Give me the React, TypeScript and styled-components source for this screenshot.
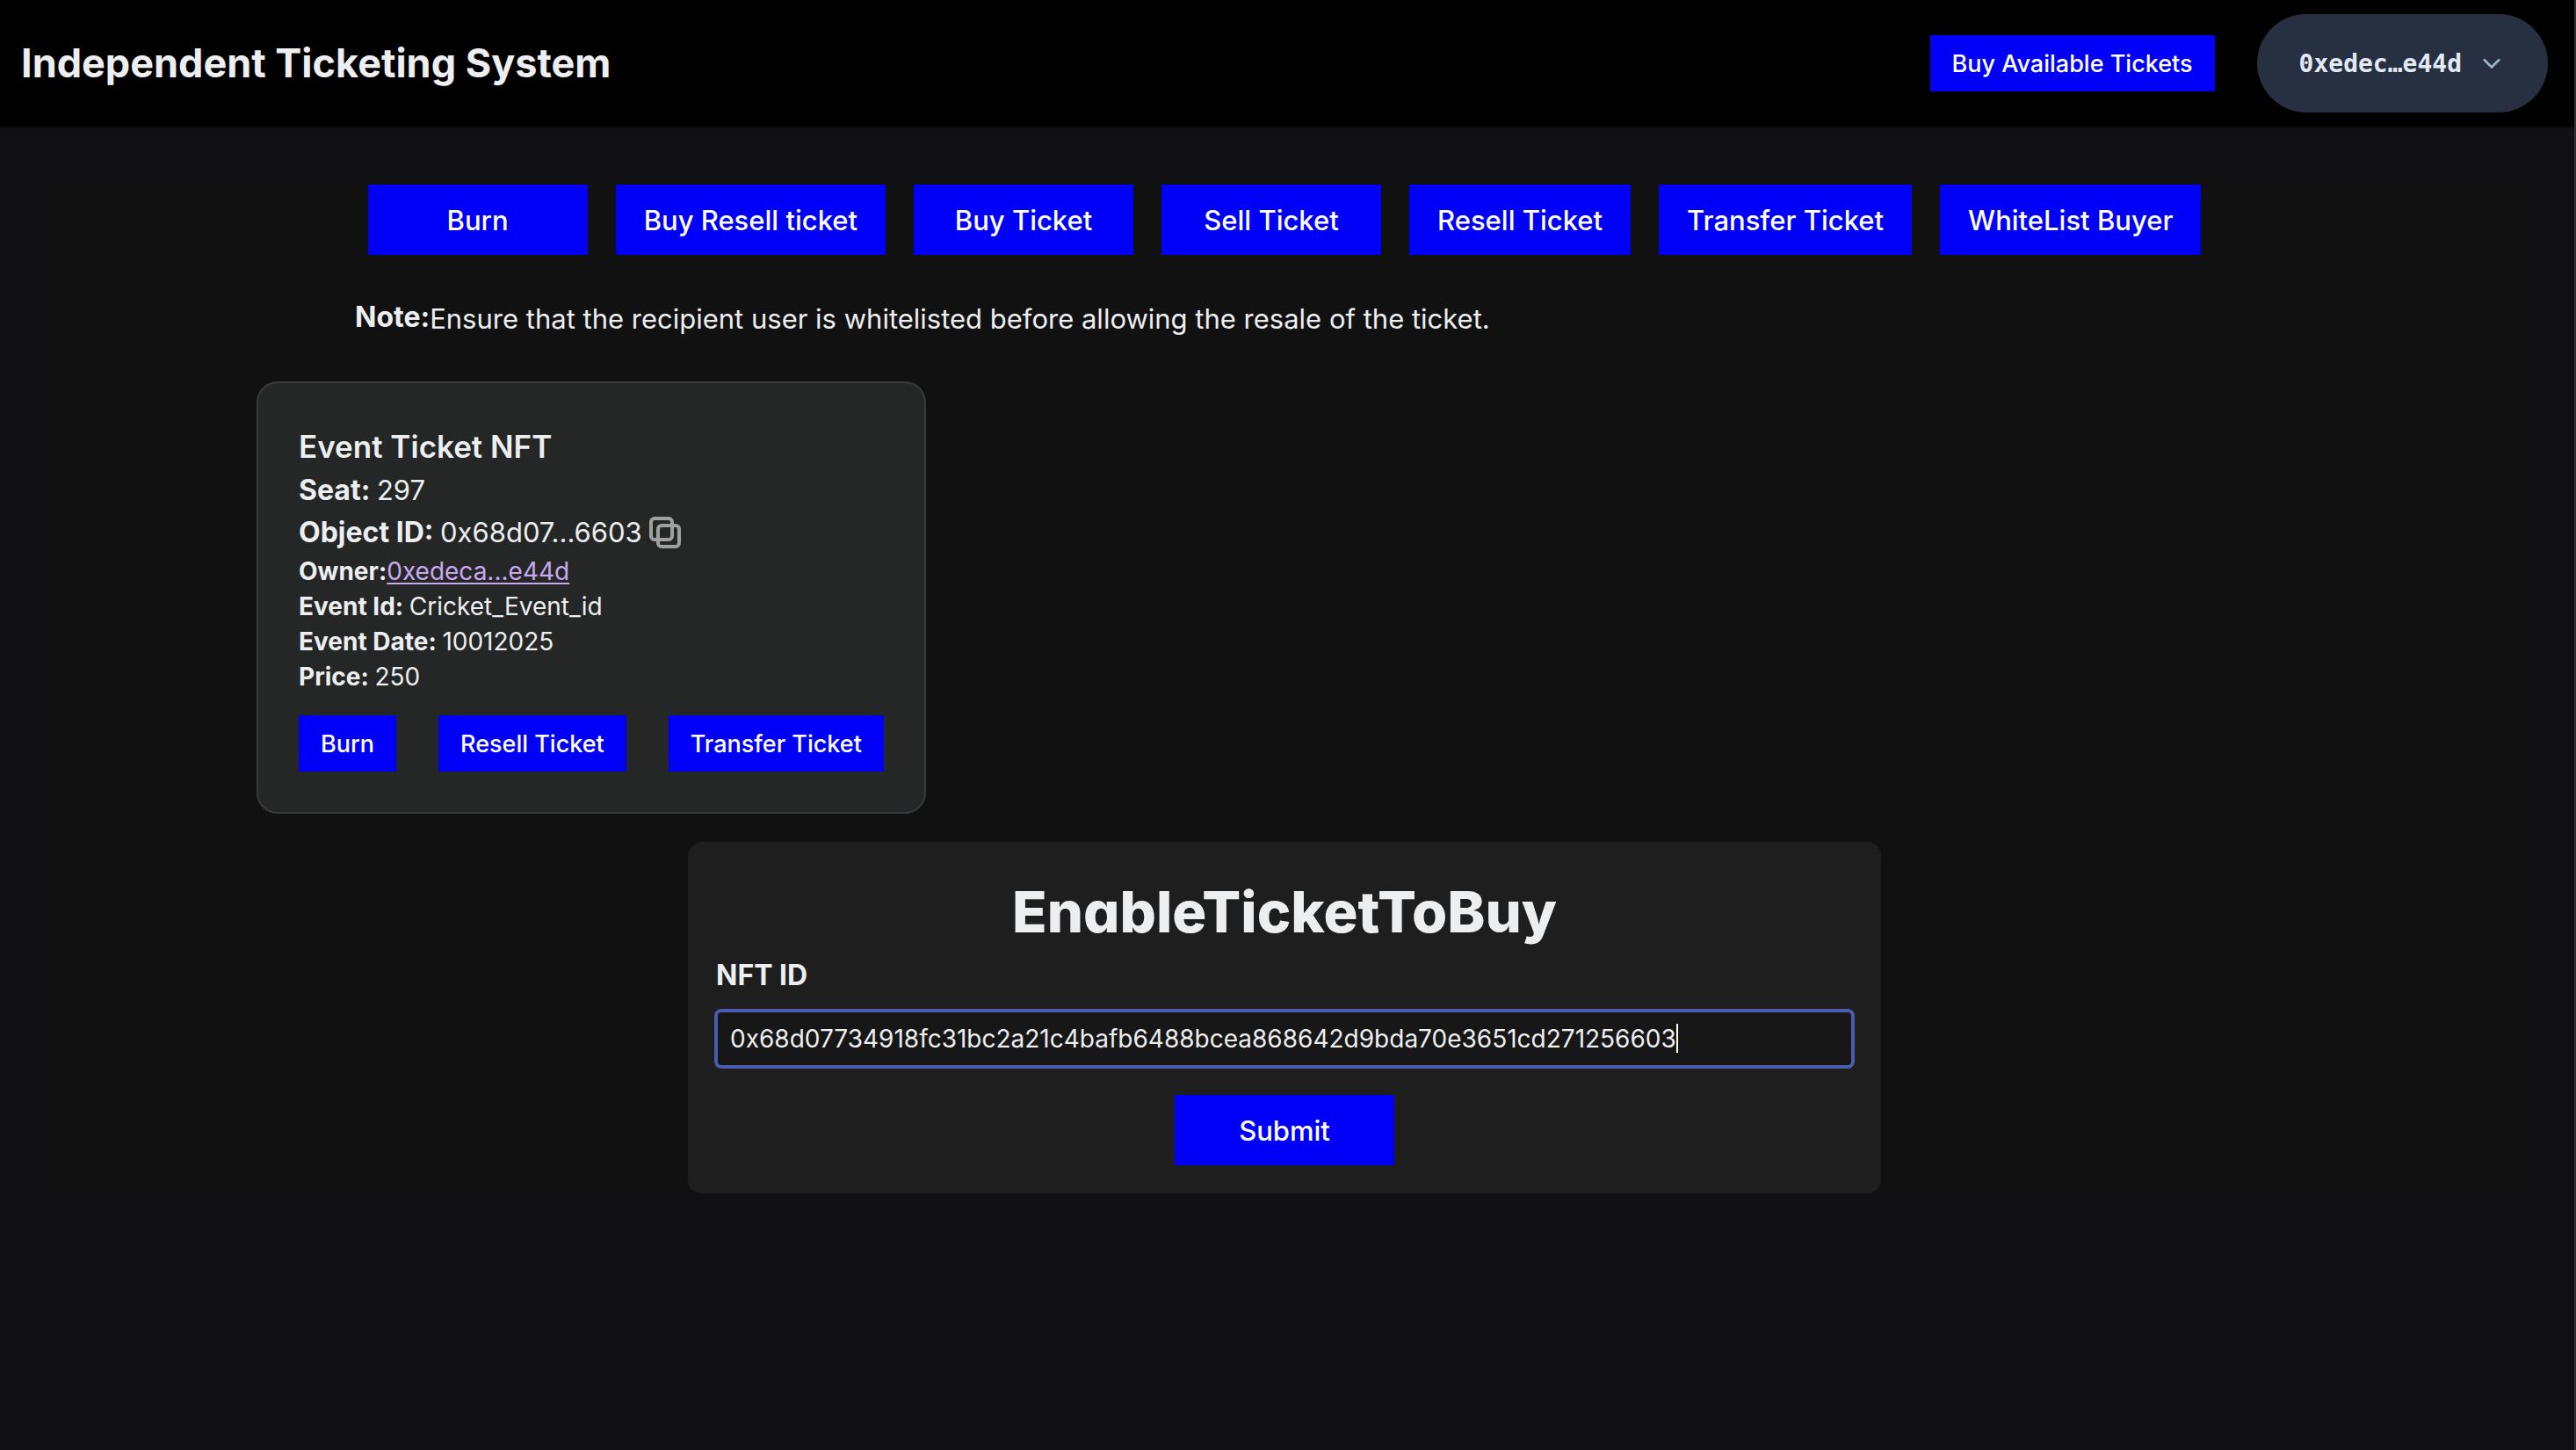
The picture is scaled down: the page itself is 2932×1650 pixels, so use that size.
import React, { useLayoutEffect, useRef, useState } from "react";
import styled, { createGlobalStyle } from "styled-components";

const GlobalStyle = createGlobalStyle`
  *, *::before, *::after { box-sizing: border-box; }
  body {
    margin: 0;
    background: #111113;
    color: #edeef0;
    font-family: Inter, "Liberation Sans", sans-serif;
  }
  h1, h2, p { margin: 0; }
  button, input { font-family: inherit; }
`;

const Page = styled.div`
  min-height: 100vh;
  border-right: 2px solid #313131;
`;

const Header = styled.header`
  display: flex;
  align-items: center;
  justify-content: space-between;
  height: 146px;
  padding: 0 30px 0 24px;
  background: #000;
  border-bottom: 2px solid #0b0b0c;
`;

const Brand = styled.h1`
  font-size: 45px;
  line-height: 60px;
  font-weight: 700;
`;

const HeaderActions = styled.div`
  display: flex;
  align-items: center;
  gap: 48px;
`;

const Button = styled.button<{ $large?: boolean }>`
  display: inline-flex;
  align-items: center;
  justify-content: center;
  height: ${(p) => (p.$large ? 80 : 64)}px;
  min-width: ${(p) => (p.$large ? 250 : 0)}px;
  padding: 0 ${(p) => (p.$large ? 32 : 25)}px;
  border: 0;
  background: #0000f8;
  color: #fff;
  font-size: ${(p) => (p.$large ? 31 : 27)}px;
  font-weight: 500;
  white-space: nowrap;
  cursor: pointer;
`;

const Wallet = styled.button`
  display: inline-flex;
  align-items: center;
  gap: 18px;
  height: 112px;
  padding: 0 48px;
  border: 0;
  border-radius: 56px;
  background: #273040;
  color: #e2e8f5;
  font-family: "DejaVu Sans Mono", monospace;
  font-size: 28px;
  font-weight: 700;
  cursor: pointer;
`;

const Main = styled.main`
  display: flex;
  flex-direction: column;
  margin: 64px 46px 0 40px;
  background: #111;
`;

const Actions = styled.nav`
  display: flex;
  flex-wrap: wrap;
  justify-content: center;
  gap: 32px;
`;

const Note = styled.p`
  display: flex;
  align-items: flex-start;
  padding: 49px 0 47px 364px;
  font-size: 31px;
  line-height: 48px;

  strong {
    font-size: 32px;
    font-weight: 700;
    line-height: 44px;
  }
`;

const Card = styled.article`
  align-self: flex-start;
  margin-left: 252px;
  padding: 48px;
  border-radius: 24px;
  background: #252727;
  box-shadow: inset 0 0 0 2px #363a3f;
`;

const CardTitle = styled.h2`
  font-size: 35px;
  line-height: 52px;
  font-weight: 600;
`;

const Field = styled.p<{ $large?: boolean }>`
  display: flex;
  align-items: center;
  font-size: ${(p) => (p.$large ? 31 : 28)}px;
  line-height: ${(p) => (p.$large ? 48 : 40)}px;
  white-space: pre;

  strong {
    font-size: ${(p) => (p.$large ? 32 : 28)}px;
    font-weight: 700;
  }
  a {
    color: #c9a9ee;
    text-decoration-thickness: 2px;
    text-underline-offset: 3px;
  }
`;

const CopyButton = styled.button`
  display: inline-flex;
  margin-left: 8px;
  padding: 0;
  border: 0;
  background: none;
  color: #a0a0a0;
  cursor: pointer;
`;

const CardActions = styled.div`
  display: flex;
  gap: 48px;
  margin-top: 24px;
`;

const Form = styled.form`
  display: flex;
  flex-direction: column;
  align-self: center;
  width: 1358px;
  max-width: 100%;
  margin-top: 32px;
  padding: 32px;
  border-radius: 16px;
  background: #1e1e1e;
`;

const FormTitle = styled.h2`
  font-size: 65px;
  line-height: 96px;
  font-weight: 800;
  font-feature-settings: "cv11";
  text-align: center;
`;

const Label = styled.label`
  font-size: 32px;
  line-height: 48px;
  font-weight: 700;
`;

const InputWrap = styled.div`
  position: relative;
  margin: 16px 0 32px;
`;

const TextInput = styled.input`
  display: block;
  width: 100%;
  height: 64px;
  padding: 0 16px;
  border: 0;
  border-radius: 6px;
  background: #171717;
  color: #edeef0;
  caret-color: transparent;
  font-size: 28px;
  outline: 4px solid #4a5cb0;
  outline-offset: -2px;
`;

const Caret = styled.span`
  position: absolute;
  top: 15px;
  width: 2px;
  height: 33px;
  background: #fff;
  pointer-events: none;
`;

const SubmitRow = styled.div`
  display: flex;
  justify-content: center;
`;

const actions = [
  "Burn",
  "Buy Resell ticket",
  "Buy Ticket",
  "Sell Ticket",
  "Resell Ticket",
  "Transfer Ticket",
  "WhiteList Buyer",
];

const cardActions = ["Burn", "Resell Ticket", "Transfer Ticket"];

const INPUT_PADDING = 16;

function ChevronIcon() {
  return (
    <svg width="32" height="32" viewBox="0 0 32 32" fill="none" stroke="#a0b6c6" strokeWidth="2.6" aria-hidden="true">
      <path d="M7 11.5 16 20.500 25 11.500" />
    </svg>
  );
}

function CopyIcon() {
  return (
    <svg width="36" height="36" viewBox="0 0 36 36" fill="none" stroke="currentColor" strokeWidth="4" aria-hidden="true">
      <rect x="2" y="2" width="24" height="24" rx="4" />
      <rect x="10" y="10" width="24" height="24" rx="4" />
    </svg>
  );
}

function NftIdInput() {
  const [value, setValue] = useState("0x68d07734918fc31bc2a21c4bafb6488bcea868642d9bda70e3651cd271256603");
  const [caretLeft, setCaretLeft] = useState(INPUT_PADDING);
  const inputRef = useRef<HTMLInputElement>(null);

  // Keep the drawn caret at the end of the typed text.
  useLayoutEffect(() => {
    const context = document.createElement("canvas").getContext("2d");
    if (!context || !inputRef.current) return;
    const style = getComputedStyle(inputRef.current);
    context.font = `${style.fontWeight} ${style.fontSize} ${style.fontFamily}`;
    setCaretLeft(INPUT_PADDING + Math.round(context.measureText(value).width));
  }, [value]);

  return (
    <InputWrap>
      <TextInput
        ref={inputRef}
        id="nft-id"
        type="text"
        value={value}
        onChange={(e) => setValue(e.target.value)}
      />
      <Caret style={{ left: caretLeft }} />
    </InputWrap>
  );
}

export default function App() {
  return (
    <>
      <GlobalStyle />
      <Page>
        <Header>
          <Brand>Independent Ticketing System</Brand>
          <HeaderActions>
            <Button type="button">Buy Available Tickets</Button>
            <Wallet type="button">
              0xedec…e44d
              <ChevronIcon />
            </Wallet>
          </HeaderActions>
        </Header>
        <Main>
          <Actions>
            {actions.map((label) => (
              <Button key={label} type="button" $large>
                {label}
              </Button>
            ))}
          </Actions>
          <Note>
            <strong>Note:</strong>
            <span>Ensure that the recipient user is whitelisted before allowing the resale of the ticket.</span>
          </Note>
          <Card>
            <CardTitle>Event Ticket NFT</CardTitle>
            <Field $large><strong>Seat: </strong>297</Field>
            <Field $large>
              <strong>Object ID: </strong>0x68d07...6603
              <CopyButton type="button" aria-label="Copy object ID"><CopyIcon /></CopyButton>
            </Field>
            <Field><strong>Owner:</strong><a href="#owner">0xedeca...e44d</a></Field>
            <Field><strong>Event Id: </strong>Cricket_Event_id</Field>
            <Field><strong>Event Date: </strong>10012025</Field>
            <Field><strong>Price: </strong>250</Field>
            <CardActions>
              {cardActions.map((label) => (
                <Button key={label} type="button">{label}</Button>
              ))}
            </CardActions>
          </Card>
          <Form onSubmit={(e) => e.preventDefault()}>
            <FormTitle>EnableTicketToBuy</FormTitle>
            <Label htmlFor="nft-id">NFT ID</Label>
            <NftIdInput />
            <SubmitRow>
              <Button type="submit" $large>Submit</Button>
            </SubmitRow>
          </Form>
        </Main>
      </Page>
    </>
  );
}
